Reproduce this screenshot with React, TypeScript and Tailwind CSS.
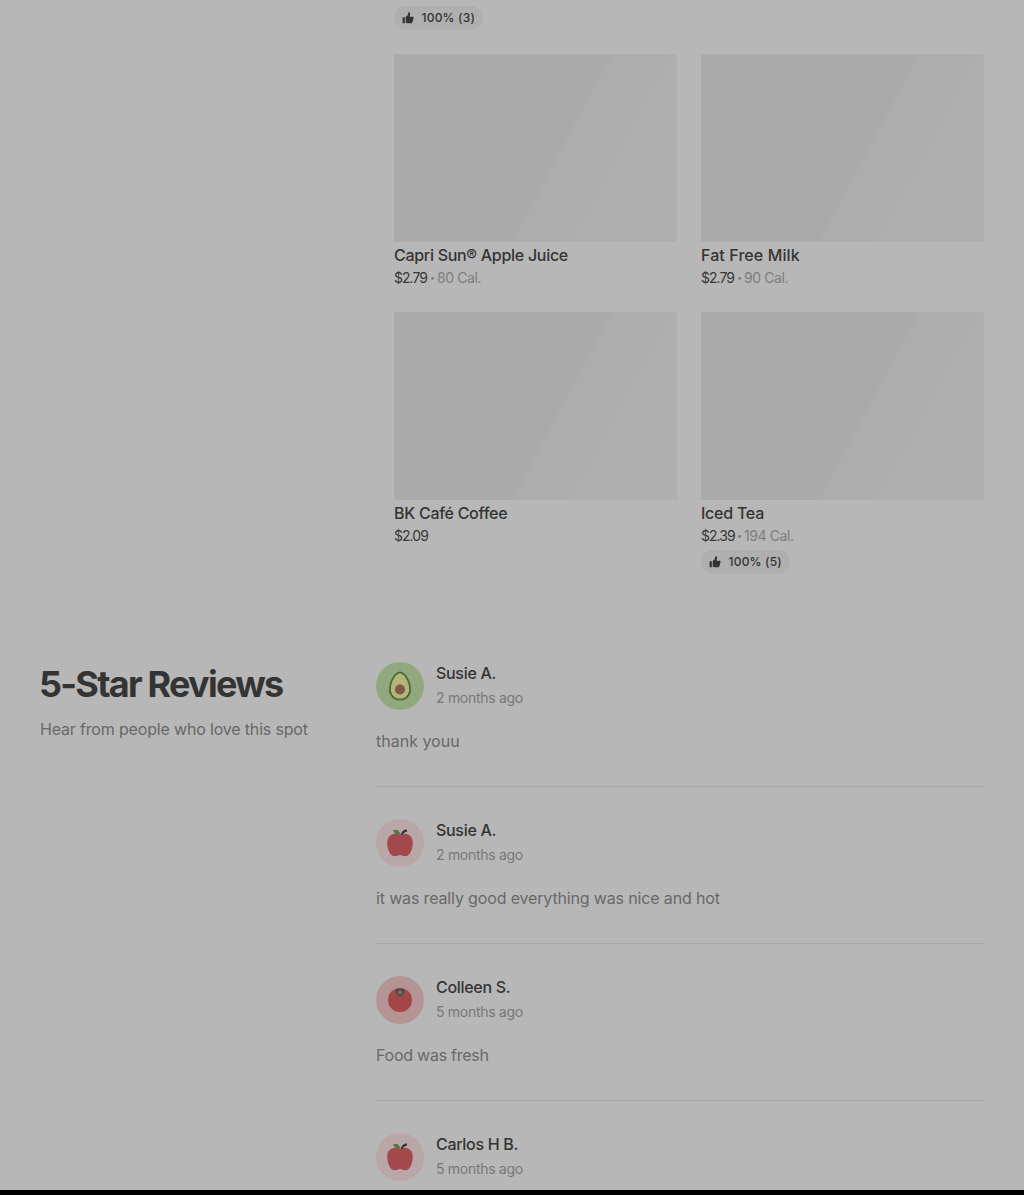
import React from "react";

function ThumbUp() {
  return (
    <svg width="12" height="12" viewBox="0 0 12 12" fill="#343434" className="shrink-0">
      <path d="M0.600 5.200h2.200v6H.600zM3.700 4.900l2-1.700L6.300.300c1.500-.2 2.100.8 1.700 2.400L7.500 4.700h3.900v2.100L10 11.200H5.300l-1.600-.7z" />
    </svg>
  );
}

function Rating({ count }: { count: number }) {
  return (
    <div className="flex h-6 w-[89px] items-center rounded-full bg-[#afafaf] pl-2 text-[12px] font-medium leading-6 text-[#343434]">
      <ThumbUp />
      <span className="ml-[7.500px] whitespace-nowrap tracking-[0.2px]">100% ({count})</span>
    </div>
  );
}

type Item = { name: string; price: string; cal?: string; rating?: number; tracking: string };

function ItemCard({ item }: { item: Item }) {
  return (
    <div className="h-[234px]">
      <div className="h-[188px] bg-[linear-gradient(118deg,#aaaaaa_0%,#aaaaaa_56%,#adadad_58%,#adadad_70%,#afafaf_74%,#afafaf_100%)]" />
      <div className={`mt-px h-6 whitespace-nowrap text-[16px] font-medium leading-6 text-[#343434] ${item.tracking}`}>
        {item.name}
      </div>
      <div className="mt-px flex h-5 whitespace-nowrap text-[14px] leading-5 text-[#7d7d7d]">
        <span className="w-[34px] tracking-[-0.95px] text-[#383838]">{item.price}</span>
        {item.cal && (
          <>
            <span className="w-[9px] text-center text-[9px]">•</span>
            <span className="tracking-[-0.4px]">{item.cal}</span>
          </>
        )}
      </div>
      {item.rating && (
        <div className="mt-1">
          <Rating count={item.rating} />
        </div>
      )}
    </div>
  );
}

const items: Item[] = [
  { name: "Capri Sun® Apple Juice", price: "$2.79", cal: "80 Cal.", tracking: "tracking-[-0.28px]" },
  { name: "Fat Free Milk", price: "$2.79", cal: "90 Cal.", tracking: "tracking-[0.1px]" },
  { name: "BK Café Coffee", price: "$2.09", tracking: "tracking-[-0.28px]" },
  { name: "Iced Tea", price: "$2.39", cal: "194 Cal.", rating: 5, tracking: "tracking-[-0.25px]" },
];

function Avocado() {
  return (
    <svg width="48" height="48" viewBox="0 0 48 48" className="shrink-0">
      <circle cx="24" cy="24" r="24" fill="#91a77e" />
      <path d="M24 9.500c-5 0-11 9-11 18 0 6.500 5 11 11 11s11-4.500 11-11c0-9-6-18-11-18z" fill="#4b6b35" />
      <path d="M24 11.300c-3.900 0-9.200 8.400-9.200 16 0 5.600 4.100 9.400 9.200 9.400s9.200-3.800 9.200-9.400c0-7.600-5.300-16-9.200-16z" fill="#b3b37c" />
      <circle cx="24" cy="27.500" r="5" fill="#80584a" />
    </svg>
  );
}

function Apple() {
  return (
    <svg width="48" height="48" viewBox="0 0 48 48" className="shrink-0">
      <circle cx="24" cy="24" r="24" fill="#b9a7a8" />
      <path d="M24 16c2-1 5-1.800 8-.5 4 1.600 5.300 6 4.600 11-.8 6-3.600 10.800-7.100 10.800-2.300 0-3.600-1.300-5.500-1.300s-3.200 1.300-5.500 1.300c-3.500 0-6.300-4.800-7.100-10.800-.7-5 .6-9.400 4.600-11 3-1.300 6-.5 8 .5z" fill="#a3494d" />
      <path d="M17 11.200c3.400-1.500 6.600.2 7.600 4.300-3.700 1-6.300-.5-7.600-4.300z" fill="#607545" />
      <path d="M24.700 15.800c.8-3 2.600-4.900 5.900-5.500l.6 2.200c-2.600.5-4 1.600-4.800 3.300z" fill="#303030" />
    </svg>
  );
}

function Tomato() {
  return (
    <svg width="48" height="48" viewBox="0 0 48 48" className="shrink-0">
      <circle cx="24" cy="24" r="24" fill="#b59495" />
      <circle cx="24" cy="24" r="12" fill="#a4474b" />
      <path d="M19.200 13.600l2.500-.8 2.300-.7 2.300.7 2.500.8-.8 3-1.900 2.600-2.100 1.300-2.100-1.300-1.900-2.600z" fill="#514d43" />
      <circle cx="24" cy="16.300" r="1.800" fill="#77806d" />
    </svg>
  );
}

const avatars = { avocado: Avocado, apple: Apple, tomato: Tomato };

type Review = { name: string; when: string; text: string; avatar: keyof typeof avatars; tracking: string };

const reviews: Review[] = [
  { name: "Susie A.", when: "2 months ago", text: "thank youu", avatar: "avocado", tracking: "tracking-normal" },
  {
    name: "Susie A.",
    when: "2 months ago",
    text: "it was really good everything was nice and hot",
    avatar: "apple",
    tracking: "tracking-[-0.15px]",
  },
  { name: "Colleen S.", when: "5 months ago", text: "Food was fresh", avatar: "tomato", tracking: "tracking-[-0.25px]" },
  { name: "Carlos H B.", when: "5 months ago", text: "", avatar: "apple", tracking: "tracking-normal" },
];

function ReviewRow({ review }: { review: Review }) {
  const Avatar = avatars[review.avatar];
  return (
    <div className="mb-8 h-[125px] border-b border-[#a9a9a9]">
      <div className="flex h-12 gap-3">
        <Avatar />
        <div className="-mt-px whitespace-nowrap">
          <div className="text-[16px] font-medium leading-6 tracking-[-0.3px] text-[#343434]">{review.name}</div>
          <div className="mt-[3px] text-[14px] leading-5 tracking-[-0.3px] text-[#777777]">{review.when}</div>
        </div>
      </div>
      <div className={`mt-[19px] text-[16px] leading-6 text-[#686868] ${review.tracking}`}>{review.text}</div>
    </div>
  );
}

export default function App() {
  return (
    <div className="flex h-[1195px] w-[1024px] flex-col overflow-hidden bg-black font-['Inter',sans-serif]">
      <main className="h-[1190px] overflow-hidden bg-[#b7b7b7] pt-1.5">
        <section className="ml-[394px] w-[590px]">
          <Rating count={3} />
          <div className="mt-6 grid grid-cols-2 gap-6">
            {items.map((item) => (
              <ItemCard key={item.name} item={item} />
            ))}
          </div>
        </section>
        <section className="mt-[116px] flex pl-10 pr-10">
          <div className="w-[336px] shrink-0">
            <h2 className="-ml-px whitespace-nowrap text-[36px] font-bold leading-[44px] tracking-[-1.75px] text-[#343434]">
              5-Star Reviews
            </h2>
            <p className="mt-[11px] whitespace-nowrap text-[16px] leading-6 tracking-[-0.17px] text-[#686868]">
              Hear from people who love this spot
            </p>
          </div>
          <div className="w-[608px]">
            {reviews.map((review, i) => (
              <ReviewRow key={i} review={review} />
            ))}
          </div>
        </section>
      </main>
    </div>
  );
}
